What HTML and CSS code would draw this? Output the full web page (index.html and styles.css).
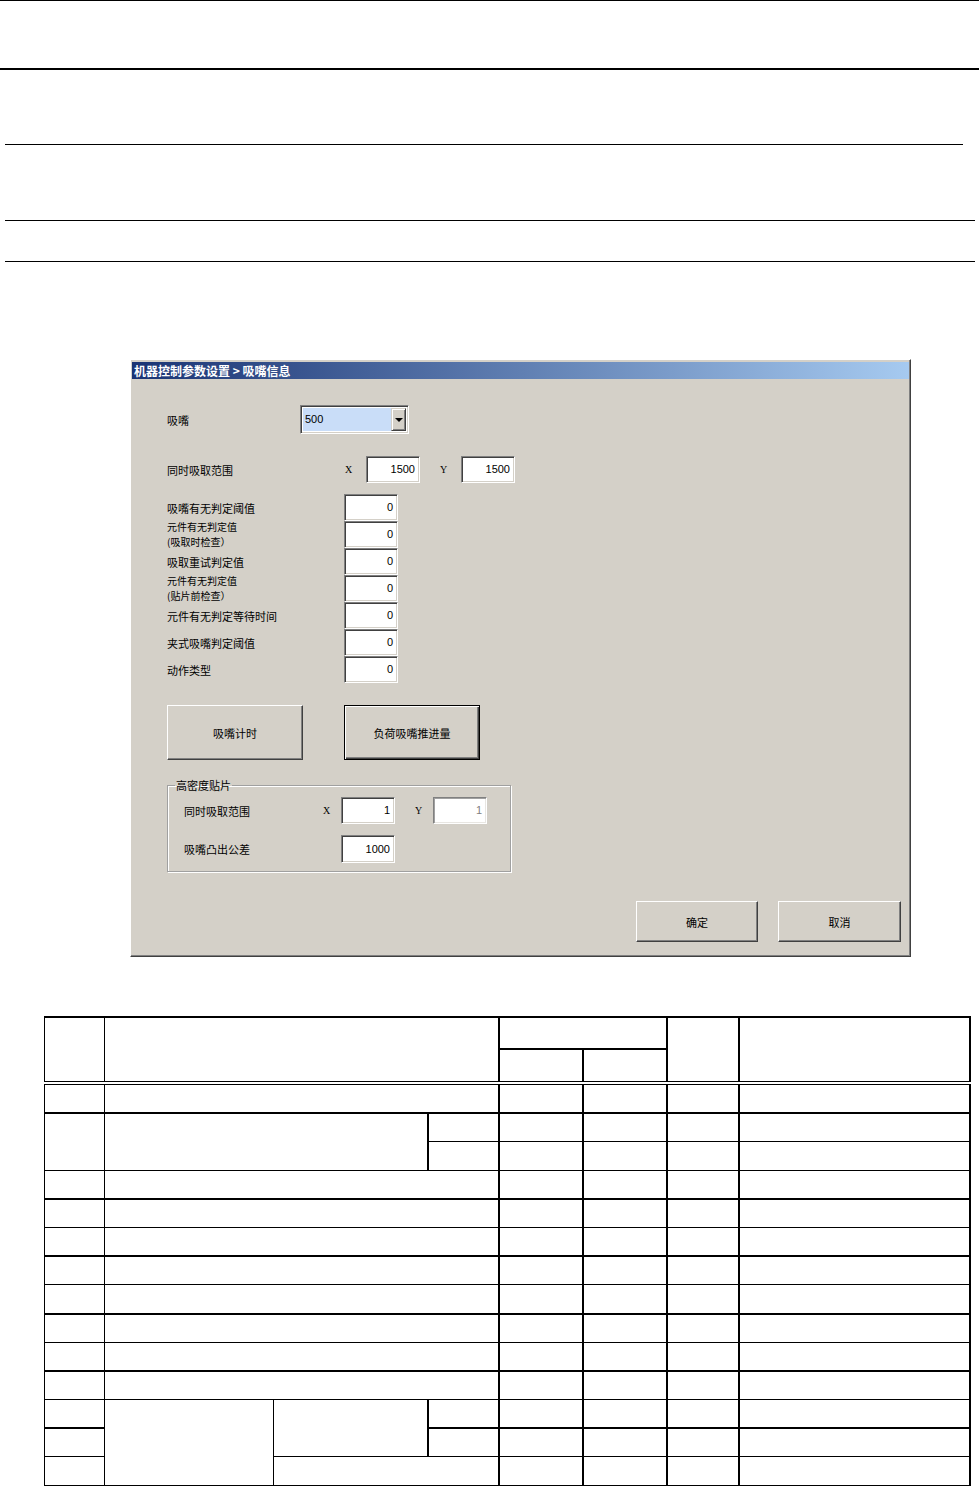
FILE: index.html
```html
<!DOCTYPE html>
<html lang="zh-CN">
<head>
  <meta charset="UTF-8">
  <title>吸嘴信息</title>
  <link rel="stylesheet" href="styles.css">
</head>
<body>
  <div class="page">
    <div class="rule rule--top"></div>
    <div class="rule rule--head"></div>
    <div class="rule rule--a"></div>
    <div class="rule rule--b"></div>
    <div class="rule rule--c"></div>

    <div class="dlg">
      <div class="dlg__title">机器控制参数设置 &gt; 吸嘴信息</div>
      <div class="dlg__body">
        <div class="row row--combo">
          <span class="lbl lbl--combo">吸嘴</span>
          <div class="combo">
            <span class="combo__val">500</span>
            <span class="combo__btn"><i class="arrow"></i></span>
          </div>
        </div>

        <div class="row row--range">
          <span class="lbl lbl--range">同时吸取范围</span>
          <span class="axis">X</span>
          <span class="field">1500</span>
          <span class="axis axis--y">Y</span>
          <span class="field">1500</span>
        </div>

        <div class="stack">
          <div class="row row--param"><span class="lbl lbl--param">吸嘴有无判定阈值</span><span class="field">0</span></div>
          <div class="row row--param"><span class="lbl lbl--param lbl--two">元件有无判定值<br>(吸取时检查）</span><span class="field">0</span></div>
          <div class="row row--param"><span class="lbl lbl--param">吸取重试判定值</span><span class="field">0</span></div>
          <div class="row row--param"><span class="lbl lbl--param lbl--two">元件有无判定值<br>(贴片前检查）</span><span class="field">0</span></div>
          <div class="row row--param"><span class="lbl lbl--param">元件有无判定等待时间</span><span class="field">0</span></div>
          <div class="row row--param"><span class="lbl lbl--param">夹式吸嘴判定阈值</span><span class="field">0</span></div>
          <div class="row row--param"><span class="lbl lbl--param">动作类型</span><span class="field">0</span></div>
        </div>

        <div class="row row--btns">
          <button class="btn btn--big">吸嘴计时</button>
          <button class="btn btn--big btn--default">负荷吸嘴推进量</button>
        </div>

        <fieldset class="group">
          <legend>高密度贴片</legend>
          <div class="row row--grp">
            <span class="lbl lbl--grp">同时吸取范围</span>
            <span class="axis axis--grp">X</span>
            <span class="field">1</span>
            <span class="axis axis--grp axis--gy">Y</span>
            <span class="field field--dim">1</span>
          </div>
          <div class="row row--grp row--grp2">
            <span class="lbl lbl--grp2">吸嘴凸出公差</span>
            <span class="field field--tall">1000</span>
          </div>
        </fieldset>

        <div class="row row--footer">
          <button class="btn btn--ok">确定</button>
          <button class="btn btn--ok btn--cancel">取消</button>
        </div>
      </div>
    </div>

    <table class="spec">
      <colgroup>
        <col class="c1"><col class="c2"><col class="c3"><col class="c4">
        <col class="c5"><col class="c6"><col class="c7"><col class="c8">
      </colgroup>
      <tr class="h1">
        <td rowspan="2"></td>
        <td colspan="3" rowspan="2"></td>
        <td colspan="2" class="vk"></td>
        <td rowspan="2" class="vk"></td>
        <td rowspan="2" class="vk"></td>
      </tr>
      <tr class="h2">
        <td class="vk"></td><td class="vk"></td>
      </tr>
      <tr class="dbl">
        <td></td><td colspan="3"></td>
        <td class="vk"></td><td class="vk"></td><td class="vk"></td><td class="vk"></td>
      </tr>
      <tr class="tk">
        <td rowspan="2"></td><td colspan="2" rowspan="2"></td><td class="vk"></td>
        <td class="vk"></td><td class="vk"></td><td class="vk"></td><td class="vk"></td>
      </tr>
      <tr>
        <td class="vk"></td>
        <td class="vk"></td><td class="vk"></td><td class="vk"></td><td class="vk"></td>
      </tr>
      <tr>
        <td></td><td colspan="3"></td>
        <td class="vk"></td><td class="vk"></td><td class="vk"></td><td class="vk"></td>
      </tr>
      <tr class="tk">
        <td></td><td colspan="3"></td>
        <td class="vk"></td><td class="vk"></td><td class="vk"></td><td class="vk"></td>
      </tr>
      <tr>
        <td></td><td colspan="3"></td>
        <td class="vk"></td><td class="vk"></td><td class="vk"></td><td class="vk"></td>
      </tr>
      <tr class="tk">
        <td></td><td colspan="3"></td>
        <td class="vk"></td><td class="vk"></td><td class="vk"></td><td class="vk"></td>
      </tr>
      <tr>
        <td></td><td colspan="3"></td>
        <td class="vk"></td><td class="vk"></td><td class="vk"></td><td class="vk"></td>
      </tr>
      <tr class="tk">
        <td></td><td colspan="3"></td>
        <td class="vk"></td><td class="vk"></td><td class="vk"></td><td class="vk"></td>
      </tr>
      <tr>
        <td></td><td colspan="3"></td>
        <td class="vk"></td><td class="vk"></td><td class="vk"></td><td class="vk"></td>
      </tr>
      <tr class="tk">
        <td></td><td colspan="3"></td>
        <td class="vk"></td><td class="vk"></td><td class="vk"></td><td class="vk"></td>
      </tr>
      <tr>
        <td></td><td rowspan="3"></td><td rowspan="2"></td><td class="vk"></td>
        <td class="vk"></td><td class="vk"></td><td class="vk"></td><td class="vk"></td>
      </tr>
      <tr class="tk">
        <td></td><td class="vk"></td>
        <td class="vk"></td><td class="vk"></td><td class="vk"></td><td class="vk"></td>
      </tr>
      <tr>
        <td></td><td colspan="2"></td>
        <td class="vk"></td><td class="vk"></td><td class="vk"></td><td class="vk"></td>
      </tr>
    </table>
  </div>
</body>
</html>
```

FILE: styles.css
```css
body {
  margin: 0;
  background: #fff;
  font-family: "Noto Sans CJK SC", "Liberation Sans", sans-serif;
  color: #000;
}
.page {
  width: 979px;
}

/* page header rules */
.rule {
  background: #000;
  height: 1px;
}
.rule--top {
  width: 979px;
}
.rule--head {
  height: 2px;
  margin-top: 67px;
}
.rule--a {
  margin: 74px 0 0 5px;
  width: 958px;
}
.rule--b {
  margin: 75px 0 0 5px;
  width: 970px;
}
.rule--c {
  margin: 40px 0 0 5px;
  width: 970px;
}

/* dialog */
.dlg {
  margin: 97px 0 0 130px;
  width: 781px;
  height: 598px;
  box-sizing: border-box;
  padding: 2px 1px;
  background: #d4d0c8;
  border: 1px solid;
  border-color: #fff #404040 #404040 #fff;
  box-shadow: inset -1px -1px #808080;
}
.dlg__title {
  height: 17px;
  line-height: 17px;
  padding-left: 2px;
  background: linear-gradient(to right, #1a3474, #a6caf0);
  color: #fff;
  font-size: 12px;
  font-weight: 700;
  white-space: nowrap;
}
.dlg__body {
  padding: 26px 8px 0 35px;
  font-size: 11px;
}
.row {
  display: flex;
  align-items: center;
}
.lbl {
  flex: none;
  white-space: nowrap;
}
.row--combo {
  height: 29px;
}
.lbl--combo {
  width: 133px;
}
.combo {
  display: flex;
  width: 109px;
  height: 29px;
  box-sizing: border-box;
  border: 1px solid;
  border-color: #808080 #fff #fff #808080;
  box-shadow: inset 1px 1px #404040, inset -1px -1px #d4d0c8;
  padding: 2px;
  background: #fff;
}
.combo__val {
  flex: 1;
  background: #c9ddf8;
  font-family: "Liberation Sans", sans-serif;
  font-size: 11px;
  line-height: 23px;
  padding-left: 2px;
}
.combo__btn {
  width: 15px;
  display: flex;
  align-items: center;
  justify-content: center;
  box-sizing: border-box;
  background: #d4d0c8;
  border: 1px solid;
  border-color: #d4d0c8 #404040 #404040 #d4d0c8;
  box-shadow: inset 1px 1px #fff, inset -1px -1px #808080;
}
.arrow {
  width: 0;
  height: 0;
  border-left: 4px solid transparent;
  border-right: 4px solid transparent;
  border-top: 4px solid #000;
}

.row--range {
  height: 27px;
  margin-top: 22px;
}
.lbl--range {
  width: 178px;
}
.axis {
  flex: none;
  width: 21px;
  font-family: "Liberation Serif", serif;
  font-size: 10px;
}
.axis--y {
  margin-left: 20px;
}
.field {
  flex: none;
  width: 54px;
  height: 27px;
  box-sizing: border-box;
  background: #fff;
  border: 1px solid;
  border-color: #808080 #fff #fff #808080;
  box-shadow: inset 1px 1px #404040, inset -1px -1px #d4d0c8;
  text-align: right;
  padding-right: 4px;
  font-family: "Liberation Sans", sans-serif;
  font-size: 11px;
  line-height: 25px;
}
.field--dim {
  color: #808080;
  box-shadow: inset 1px 1px #a0a0a0, inset -1px -1px #e8e6e2;
}
.field--tall {
  height: 28px;
  line-height: 26px;
}

.stack {
  margin-top: 11px;
}
.row--param {
  height: 27px;
}
.lbl--param {
  width: 177px;
}
.lbl--two {
  font-size: 10px;
  line-height: 14.5px;
}

.row--btns {
  margin-top: 22px;
  gap: 41px;
}
.btn {
  padding: 0;
  margin: 0;
  box-sizing: border-box;
  background: #d4d0c8;
  border: 1px solid;
  border-color: #fff #404040 #404040 #fff;
  box-shadow: inset -1px -1px #808080;
  font-family: "Noto Sans CJK SC", sans-serif;
  font-size: 11px;
  color: #000;
}
.btn--big {
  width: 136px;
  height: 55px;
}
.btn--default {
  border-color: #000;
  box-shadow: inset 1px 1px #fff, inset -1px -1px #404040, inset -2px -2px #808080;
}

.group {
  margin: 19px 0 0;
  padding: 0 0 8px;
  width: 344px;
  box-sizing: border-box;
  border: 1px solid #a0a0a0;
  box-shadow: inset 1px 1px #fff, 1px 1px #fff;
  min-width: 0;
}
.group legend {
  margin-left: 7px;
  padding: 0 1px;
  font-size: 11px;
  line-height: 12px;
}
.row--grp {
  height: 27px;
  margin-top: 6px;
  padding-left: 16px;
}
.row--grp2 {
  height: 28px;
  margin-top: 11px;
}
.lbl--grp {
  width: 139px;
}
.axis--grp {
  width: 18px;
}
.axis--gy {
  margin-left: 20px;
}
.lbl--grp2 {
  width: 157px;
}

.row--footer {
  margin-top: 29px;
  justify-content: flex-end;
  gap: 20px;
}
.btn--ok {
  width: 122px;
  height: 41px;
}
.btn--cancel {
  width: 123px;
}

/* empty spec table */
.spec {
  margin: 59px 0 0 44px;
  width: 925px;
  table-layout: fixed;
  border-collapse: collapse;
  border: 2px solid #000;
  border-left-width: 1px;
}
.spec td {
  border: 1px solid #000;
  padding: 0;
  height: 27.2px;
}
.spec .h1 td {
  height: 30px;
}
.spec .h2 td {
  height: 31px;
  border-top: 2px solid #000;
}
.spec td.vk {
  border-left: 2px solid #000;
}
.spec .tk > td {
  border-top: 2px solid #000;
}
.spec .dbl > td {
  border-top: 4px double #000;
}
.c1 { width: 60px; }
.c2 { width: 169px; }
.c3 { width: 154px; }
.c4 { width: 71px; }
.c5 { width: 84px; }
.c6 { width: 84px; }
.c7 { width: 72px; }
.c8 { width: 231px; }
```
